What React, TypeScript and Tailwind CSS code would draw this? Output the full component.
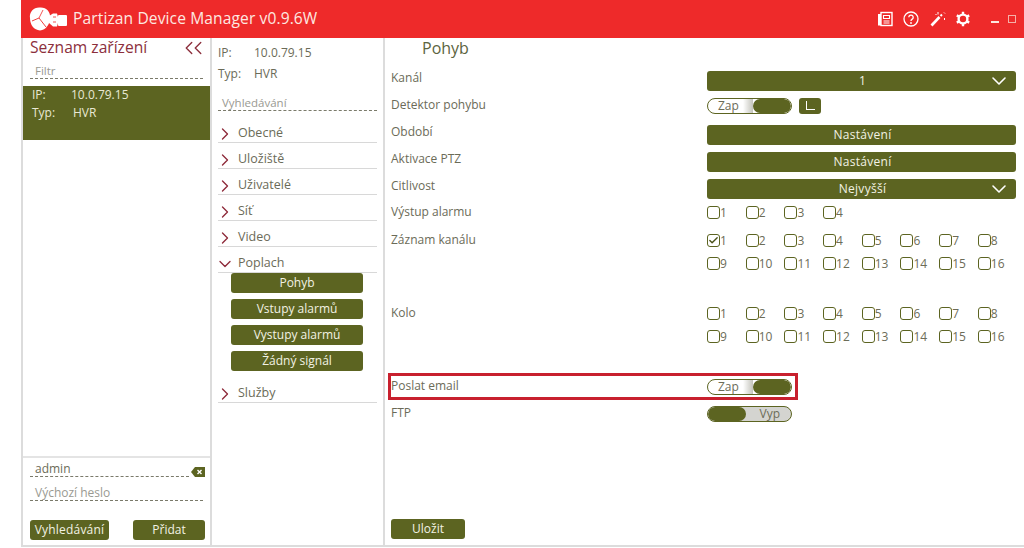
import { Check, ChevronDown, ChevronLeft, ChevronRight } from "lucide-react";

const MENU_TOP = ["Obecné", "Uložiště", "Uživatelé", "Síť", "Video"];
const ALARM_ITEMS = ["Pohyb", "Vstupy alarmů", "Vystupy alarmů", "Žádný signál"];

function Logo() {
  return (
    <svg width="38" height="24" viewBox="0 0 38 24" className="shrink-0">
      <path d="M1 11 C0 5 5 0 11 0.5 C17 0 22 5 21 11 C21 17 17 23 11 23.5 C5 23 1 18 1 11 Z" fill="#fff" />
      <path d="M3 14 L10 11 L17 20" stroke="#ee2a2a" strokeWidth="0.9" fill="none" />
      <path d="M10 11 L14 3" stroke="#ee2a2a" strokeWidth="0.8" fill="none" />
      <path d="M20 9 L24 6.5 H28 L29 10 V16 L28 19.5 H24 L20 16 Z" fill="#fff" />
      <rect x="29" y="8" width="9" height="11" rx="1" fill="#fff" />
      <path d="M24 10 h3 M24 15 h3" stroke="#ee2a2a" strokeWidth="0.8" />
    </svg>
  );
}

function HeaderIcons() {
  return (
    <div className="flex items-center text-white">
      <svg width="16" height="16" viewBox="0 0 16 16" className="mr-[10px]">
        <rect x="4" y="1.5" width="11" height="13" fill="none" stroke="#fff" strokeWidth="1.4" />
        <rect x="1" y="3" width="3" height="11.5" fill="#fff" />
        <path d="M6.5 4.5h6v3h-6zM6.5 10h6M6.5 12h6" fill="none" stroke="#fff" strokeWidth="1.1" />
      </svg>
      <svg width="16" height="16" viewBox="0 0 16 16" className="mr-[11px]">
        <circle cx="8" cy="8" r="7" fill="none" stroke="#fff" strokeWidth="1.3" />
        <path d="M5.8 6.2a2.2 2.2 0 1 1 3.4 1.9c-.8.5-1.2 1-1.2 1.9" fill="none" stroke="#fff" strokeWidth="1.3" />
        <circle cx="8" cy="12" r="0.9" fill="#fff" />
      </svg>
      <svg width="16" height="16" viewBox="0 0 16 16" className="mr-[9px]">
        <path d="M1.5 14.5 L9.5 6" stroke="#fff" strokeWidth="2.6" />
        <path d="M10.5 5 L12 3.5" stroke="#fff" strokeWidth="2" />
        <path d="M8 1v2.5M14.5 7v2M14 1.5l1 1M5.5 3l1 1" stroke="#fff" strokeWidth="1" />
      </svg>
      <svg width="16" height="16" viewBox="0 0 16 16" className="mr-[20px]">
        <circle cx="8" cy="8" r="4.4" fill="none" stroke="#fff" strokeWidth="2.4" />
        <path d="M8 .8v3M8 12.2v3M1.8 4.4l2.6 1.5M11.6 10.1l2.6 1.5M1.8 11.6l2.6-1.5M11.6 5.9l2.6-1.5" stroke="#fff" strokeWidth="2.4" />
      </svg>
      <div className="mr-[9px] mt-[6px] h-[2px] w-[8px] bg-[#fde8e0]" />
      <div className="mr-[8px] h-[8px] w-[8px] border border-[#f4b0a8]" />
    </div>
  );
}

function DottedField({ text, muted, className }: { text: string; muted?: boolean; className?: string }) {
  return (
    <div className={`border-b border-dashed border-[#7a7a6a] leading-[15px] ${muted ? "text-[#9a9a92]" : "text-[#6c6c58]"} ${className ?? ""}`}>
      {text}
    </div>
  );
}

function MenuRow({ label, open }: { label: string; open?: boolean }) {
  return (
    <div className="flex h-[18px] items-center border-b border-[#d8d8d8] text-[12.5px] text-[#6b6b58]">
      {open ? (
        <ChevronDown size={20} strokeWidth={1.6} className="-my-1 -ml-[3.5px] mr-[3.5px] text-[#8e2a3a]" />
      ) : (
        <ChevronRight size={20} strokeWidth={1.6} className="-my-1 -ml-[3.5px] mr-[3.5px] text-[#8e2a3a]" />
      )}
      {label}
    </div>
  );
}

function OliveBar({ label, chevron }: { label: string; chevron?: boolean }) {
  return (
    <div className="relative mt-[4px] flex h-[20px] w-[309px] items-center justify-center rounded-[3px] bg-[#5c6421] pl-[2px] text-[12px] tracking-[0.3px] text-[#f2f2e4]">
      {label}
      {chevron && <ChevronDown size={24} strokeWidth={1.6} className="absolute right-[5px] text-white" />}
    </div>
  );
}

function Toggle({ on }: { on: boolean }) {
  if (on) {
    return (
      <div className="flex h-[16px] w-[85px] items-center overflow-hidden rounded-full border border-[#5c6421] bg-white">
        <span className="pl-[10px] text-[12px] leading-none text-[#6c6c58]">Zap</span>
        <div className="ml-auto h-full w-[10px] bg-gradient-to-r from-white to-[#c4c4bc]" />
        <div className="h-full w-[38px] rounded-full bg-[#5c6421]" />
      </div>
    );
  }
  return (
    <div className="flex h-[16px] w-[85px] items-center overflow-hidden rounded-full border border-[#5c6421] bg-[#d4d4d0]">
      <div className="h-full w-[38px] rounded-full bg-[#5c6421]" />
      <span className="ml-auto pr-[11px] text-[12px] leading-none text-[#6c6c58]">Vyp</span>
    </div>
  );
}

function Box({ n, checked }: { n: number; checked?: boolean }) {
  return (
    <div className="flex h-[23px] w-[38.7px] items-center text-[12px] text-[#6c6c58]">
      <div className="flex h-[13px] w-[13px] shrink-0 items-center justify-center rounded-[3px] border border-[#5c6421] bg-white">
        {checked && <Check size={13} strokeWidth={3} className="text-[#4a5118]" />}
      </div>
      <span className="leading-none">{n}</span>
    </div>
  );
}

function BoxRow({ from, to, checked }: { from: number; to: number; checked?: number }) {
  const nums = Array.from({ length: to - from + 1 }, (_, i) => from + i);
  return (
    <div className="flex">
      {nums.map(n => <Box key={n} n={n} checked={n === checked} />)}
    </div>
  );
}

function Row({ label, children, className }: { label: string; children?: React.ReactNode; className?: string }) {
  return (
    <div className={`flex h-[27px] items-center ${className ?? ""}`}>
      <div className="w-[316px] shrink-0 pb-[2px] text-[12px] text-[#6b6b58]">{label}</div>
      {children}
    </div>
  );
}

export default function App() {
  return (
    <div className="flex h-[548px] w-[1024px] flex-col overflow-hidden bg-white pl-[21px] font-['Open_Sans',sans-serif]">
      <header className="flex h-[38px] shrink-0 items-center justify-between bg-[#ee2a2a] text-white">
        <div className="flex items-center">
          <div className="ml-[8px] mr-[6px] flex"><Logo /></div>
          <span className="text-[15.6px] leading-none tracking-[0.1px] text-[#fde8e0]">Partizan Device Manager v0.9.6W</span>
        </div>
        <HeaderIcons />
      </header>

      <div className="flex h-[509px] border-b-2 border-l-2 border-[#dcdcdc]">
        <aside className="flex w-[189px] shrink-0 flex-col border-r-2 border-[#dcdcdc]">
          <div className="flex h-[20px] items-center justify-between pl-[7px] pr-[1px]">
            <span className="text-[15.6px] leading-none text-[#8c2f3c]">Seznam zařízení</span>
            <div className="flex">
              <ChevronLeft size={22} strokeWidth={1.5} className="-mr-[13px] text-[#8c2f3c]" />
              <ChevronLeft size={22} strokeWidth={1.5} className="text-[#8c2f3c]" />
            </div>
          </div>
          <DottedField text="Filtr" muted className="mx-[7px] mt-[5px] pl-[5px] text-[11.5px]" />
          <div className="mt-[7px] h-[54px] bg-[#5c6421] pl-[9px] text-[12px] leading-[18px] text-[#e8e8d4]">
            <div className="flex"><span className="w-[39px]">IP:</span>10.0.79.15</div>
            <div className="flex"><span className="w-[41px]">Typ:</span>HVR</div>
          </div>
          <div className="mt-auto border-t-2 border-[#e4e4e4] pb-[5px] pl-[7px] pr-[5px] pt-[3px]">
            <div className="relative">
              <DottedField text="admin" className="mr-[16px] pl-[5px] text-[12px]" />
              <svg width="14" height="10" viewBox="0 0 14 10" className="absolute right-0 top-[6px]">
                <path d="M0 5 L4 0 H14 V10 H4 Z" fill="#5c6421" />
                <path d="M6.5 3 L10.5 7 M10.5 3 L6.5 7" stroke="#fff" strokeWidth="1.4" />
              </svg>
            </div>
            <DottedField text="Výchozí heslo" muted className="mr-[2px] mt-[8px] pl-[5px] text-[12px]" />
            <div className="mt-[19px] flex justify-between">
              <div className="flex h-[20px] w-[79px] items-center justify-center rounded-[3px] bg-[#5c6421] text-[12px] tracking-[0.2px] text-[#f2f2e4]">Vyhledávání</div>
              <div className="flex h-[20px] w-[72px] items-center justify-center rounded-[3px] bg-[#5c6421] text-[12px] text-[#f2f2e4]">Přidat</div>
            </div>
          </div>
        </aside>

        <nav className="flex w-[173px] shrink-0 flex-col border-r-2 border-[#dcdcdc] px-[6px] pt-[4px]">
          <div className="text-[12px] leading-[21px] text-[#6b6b58]">
            <div className="flex"><span className="w-[36px]">IP:</span>10.0.79.15</div>
            <div className="flex"><span className="w-[36px]">Typ:</span>HVR</div>
          </div>
          <DottedField text="Vyhledávání" muted className="mt-[11px] pl-[4px] text-[11.5px]" />
          <div className="mt-[14px] flex flex-col gap-[8px]">
            {MENU_TOP.map(l => <MenuRow key={l} label={l} />)}
            <MenuRow label="Poplach" open />
          </div>
          <div className="flex flex-col items-center gap-[6px] pr-[1px]">
            {ALARM_ITEMS.map(l => (
              <div key={l} className="flex h-[20px] w-[132px] items-center justify-center rounded-[3px] bg-[#5c6421] text-[12px] text-[#f2f2e4]">{l}</div>
            ))}
          </div>
          <div className="mt-[14px]"><MenuRow label="Služby" /></div>
        </nav>

        <main className="flex flex-1 flex-col pl-[6px]">
          <div className="h-[25px] pl-[31px] text-[16px] leading-[20px] text-[#5c6440]">Pohyb</div>
          <div className="mt-[2px] flex flex-col">
            <Row label="Kanál"><OliveBar label="1" chevron /></Row>
            <Row label="Detektor pohybu">
              <Toggle on />
              <div className="ml-[7px] flex h-[16px] w-[22px] items-center justify-center rounded-[3px] bg-[#5c6421]">
                <div className="mb-[1px] h-[9px] w-[9px] border-b border-l border-white" />
              </div>
            </Row>
            <Row label="Období"><OliveBar label="Nastávení" /></Row>
            <Row label="Aktivace PTZ"><OliveBar label="Nastávení" /></Row>
            <Row label="Citlivost"><OliveBar label="Nejvyšší" chevron /></Row>
            <Row label="Výstup alarmu" className="!h-[25px]"><BoxRow from={1} to={4} /></Row>
            <div className="mt-[4px] flex">
              <div className="w-[316px] pt-[2px] text-[12px] text-[#6b6b58]">Záznam kanálu</div>
              <div>
                <BoxRow from={1} to={8} checked={1} />
                <BoxRow from={9} to={16} />
              </div>
            </div>
            <div className="mt-[27px] flex">
              <div className="w-[316px] pt-[2px] text-[12px] text-[#6b6b58]">Kolo</div>
              <div>
                <BoxRow from={1} to={8} />
                <BoxRow from={9} to={16} />
              </div>
            </div>
            <div className="relative mt-[25px]">
              <Row label="Poslat email"><Toggle on /></Row>
              <div className="pointer-events-none absolute -left-[3px] top-0 h-[27px] w-[410px] border-[3px] border-[#c8202e]" />
            </div>
            <Row label="FTP"><Toggle on={false} /></Row>
          </div>
          <div className="mb-[6px] mt-auto flex h-[20px] w-[74px] items-center justify-center rounded-[3px] bg-[#5c6421] text-[12px] text-[#f2f2e4]">Uložit</div>
        </main>
      </div>
    </div>
  );
}
